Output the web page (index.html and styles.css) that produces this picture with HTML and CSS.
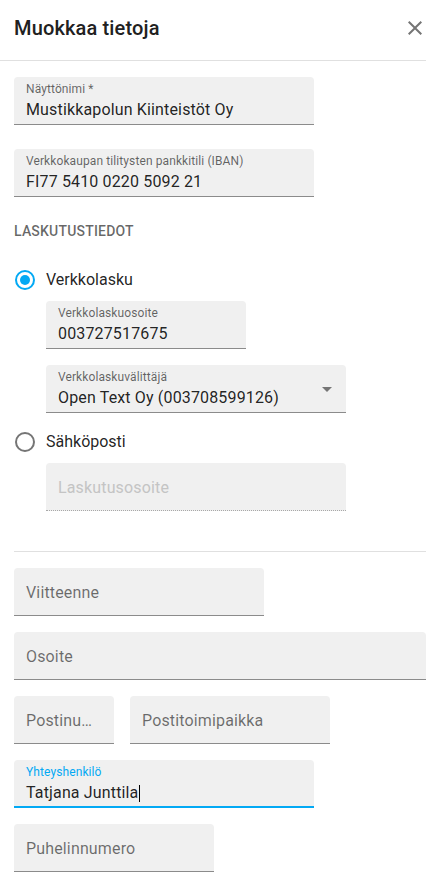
FILE: index.html
```html
<!DOCTYPE html>
<html lang="fi">
<head>
<meta charset="utf-8">
<title>Muokkaa tietoja</title>
<link rel="stylesheet" href="styles.css">
</head>
<body>
<div class="dialog">
  <header class="header">
    <h1 class="title">Muokkaa tietoja</h1>
    <button class="close" aria-label="Sulje">
      <svg width="14" height="14" viewBox="5 5 14 14"><path d="M19 6.41L17.59 5 12 10.59 6.41 5 5 6.41 10.59 12 5 17.59 6.41 19 12 13.41 17.59 19 19 17.59 13.41 12z" fill="#757575"/></svg>
    </button>
  </header>
  <main class="content">
    <div class="field w300 mt16">
      <div class="field-inner">
        <span class="label">Näyttönimi *</span>
        <span class="value">Mustikkapolun Kiinteistöt Oy</span>
      </div>
    </div>
    <div class="field w300 mt24">
      <div class="field-inner">
        <span class="label">Verkkokaupan tilitysten pankkitili (IBAN)</span>
        <span class="value">FI77 5410 0220 5092 21</span>
      </div>
    </div>

    <div class="section-title">LASKUTUSTIEDOT</div>

    <div class="radio-row first">
      <span class="radio checked"></span>
      <span class="radio-label">Verkkolasku</span>
    </div>
    <div class="sub">
      <div class="field w200 mt1">
        <div class="field-inner">
          <span class="label">Verkkolaskuosoite</span>
          <span class="value">003727517675</span>
        </div>
      </div>
      <div class="field w300 mt16">
        <div class="field-inner">
          <span class="label">Verkkolaskuvälittäjä</span>
          <span class="value">Open Text Oy (003708599126)</span>
        </div>
        <span class="arrow"></span>
      </div>
    </div>

    <div class="radio-row second">
      <span class="radio"></span>
      <span class="radio-label">Sähköposti</span>
    </div>
    <div class="sub">
      <div class="field w300 mt1 disabled">
        <div class="field-inner">
          <span class="placeholder">Laskutusosoite</span>
        </div>
      </div>
    </div>

    <hr class="divider">

    <div class="field w250 mt16">
      <div class="field-inner"><span class="placeholder">Viitteenne</span></div>
    </div>
    <div class="field wfull mt16">
      <div class="field-inner"><span class="placeholder">Osoite</span></div>
    </div>
    <div class="row mt16">
      <div class="field w100">
        <div class="field-inner"><span class="placeholder ellipsis">Postinumero</span></div>
      </div>
      <div class="field w200">
        <div class="field-inner"><span class="placeholder">Postitoimipaikka</span></div>
      </div>
    </div>
    <div class="field w300 mt16 focused">
      <div class="field-inner">
        <span class="label">Yhteyshenkilö</span>
        <span class="value">Tatjana Junttila<span class="caret"></span></span>
      </div>
    </div>
    <div class="field w200 mt16">
      <div class="field-inner"><span class="placeholder">Puhelinnumero</span></div>
    </div>
  </main>
</div>
</body>
</html>
```

FILE: styles.css
```css
* { box-sizing: border-box; }
html, body { margin: 0; padding: 0; background: #fff; }
body {
  font-family: Roboto, "Liberation Sans", sans-serif;
  color: rgba(0, 0, 0, 0.87);
  overflow-x: hidden;
}
.dialog { width: 426px; }
.header {
  height: 61px;
  border-bottom: 1px solid #e0e0e0;
  display: flex;
  align-items: center;
  justify-content: space-between;
  padding: 0 4px 4px 14px;
}
.title {
  margin: 0;
  font-size: 20px;
  font-weight: 500;
  line-height: 24px;
  letter-spacing: 0.15px;
  color: #212121;
}
.close {
  border: 0;
  background: none;
  padding: 0;
  width: 14px;
  height: 14px;
  display: flex;
}
.content { padding-left: 14px; }
.field {
  height: 48px;
  background: #f0f0f0;
  border-radius: 4px 4px 0 0;
  border-bottom: 1px solid rgba(0, 0, 0, 0.42);
  padding: 0 12px;
  display: flex;
  align-items: stretch;
}
.field-inner {
  flex: 1;
  min-width: 0;
  display: flex;
  flex-direction: column;
  padding-top: 4px;
}
.label {
  font-size: 12px;
  line-height: 16px;
  letter-spacing: 0.1px;
  color: rgba(0, 0, 0, 0.6);
}
.value {
  margin-top: 3px;
  font-size: 16px;
  line-height: 20px;
  letter-spacing: 0.15px;
  white-space: nowrap;
  display: flex;
  align-items: center;
}
.placeholder {
  margin-top: 11px;
  font-size: 16px;
  line-height: 20px;
  letter-spacing: 0.15px;
  color: rgba(0, 0, 0, 0.56);
  white-space: nowrap;
}
.ellipsis { overflow: hidden; text-overflow: ellipsis; }
.disabled { border-bottom: 1px dotted #a8a8a8; }
.disabled .placeholder { color: #c4c4c4; }
.focused { border-bottom: 2px solid #03a9f4; }
.focused .label { color: #03a9f4; }
.caret {
  display: inline-block;
  width: 1px;
  height: 17px;
  background: #000;
  margin-left: 1px;
}
.arrow {
  align-self: center;
  width: 0;
  height: 0;
  border-left: 5px solid transparent;
  border-right: 5px solid transparent;
  border-top: 5px solid #757575;
  margin-right: 2px;
  margin-top: 2px;
}
.w100 { width: 100px; }
.w200 { width: 200px; }
.w250 { width: 250px; }
.w300 { width: 300px; }
.wfull { width: 100%; }
.mt1 { margin-top: 1px; }
.mt16 { margin-top: 16px; }
.mt24 { margin-top: 24px; }
.row { display: flex; gap: 16px; }
.section-title {
  margin-top: 24px;
  font-size: 14px;
  font-weight: 500;
  line-height: 20px;
  color: rgba(0, 0, 0, 0.6);
  letter-spacing: 0.2px;
}
.radio-row {
  height: 40px;
  display: flex;
  align-items: center;
  gap: 11px;
}
.radio-row.first { margin-top: 19px; }
.radio-row.second { margin-top: 9px; }
.radio {
  width: 20px;
  height: 20px;
  border-radius: 50%;
  border: 2px solid #757575;
  margin-left: 1px;
  display: flex;
  align-items: center;
  justify-content: center;
  flex: none;
}
.radio.checked { border-color: #03a9f4; }
.radio.checked::after {
  content: "";
  width: 10px;
  height: 10px;
  border-radius: 50%;
  background: #03a9f4;
}
.radio-label { font-size: 16px; line-height: 20px; }
.sub { padding-left: 32px; }
.divider {
  margin: 40px 0 0;
  border: 0;
  border-top: 1px solid #e0e0e0;
  height: 0;
}
```
